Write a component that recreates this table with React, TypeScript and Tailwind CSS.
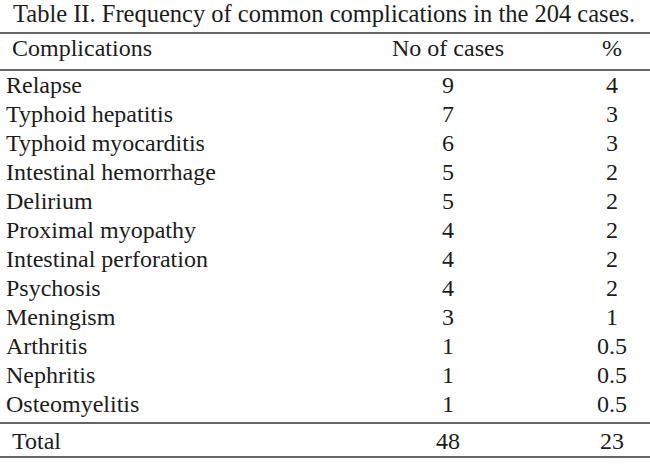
import React from 'react';

const rows: [string, string, string][] = [
  ['Relapse', '9', '4'],
  ['Typhoid hepatitis', '7', '3'],
  ['Typhoid myocarditis', '6', '3'],
  ['Intestinal hemorrhage', '5', '2'],
  ['Delirium', '5', '2'],
  ['Proximal myopathy', '4', '2'],
  ['Intestinal perforation', '4', '2'],
  ['Psychosis', '4', '2'],
  ['Meningism', '3', '1'],
  ['Arthritis', '1', '0.5'],
  ['Nephritis', '1', '0.5'],
  ['Osteomyelitis', '1', '0.5'],
];

const App: React.FC = () => {
  return (
    <div
      className="w-[650px] h-[466px] bg-white text-[#1c1c1c] text-[24px] leading-[29px] overflow-hidden"
      style={{ fontFamily: '"Liberation Serif", "Times New Roman", serif' }}
    >
      <div className="h-[32px] pl-[13px] text-[24.5px] leading-[28px]">
        Table II. Frequency of common complications in the 204 cases.
      </div>
      <div className="border-t-2 border-b-2 border-[#666]">
        <div className="grid grid-cols-[388px_120px_1fr] h-[35px]">
          <div className="pl-[12px]">Complications</div>
          <div className="text-center">No of cases</div>
          <div className="text-center pl-[74px] pr-[8px]">%</div>
        </div>
        <div className="border-t-2 border-[#666] pb-[3px]">
          {rows.map(([name, n, pct]) => (
            <div key={name} className="grid grid-cols-[388px_120px_1fr]">
              <div className="pl-[6px]">{name}</div>
              <div className="text-center">{n}</div>
              <div className="text-center pl-[74px] pr-[8px]">{pct}</div>
            </div>
          ))}
        </div>
        <div className="border-t-2 border-[#666] pt-[3px] grid grid-cols-[388px_120px_1fr] h-[34px]">
          <div className="pl-[12px]">Total</div>
          <div className="text-center">48</div>
          <div className="text-center pl-[74px] pr-[8px]">23</div>
        </div>
      </div>
    </div>
  );
};

export default App;
